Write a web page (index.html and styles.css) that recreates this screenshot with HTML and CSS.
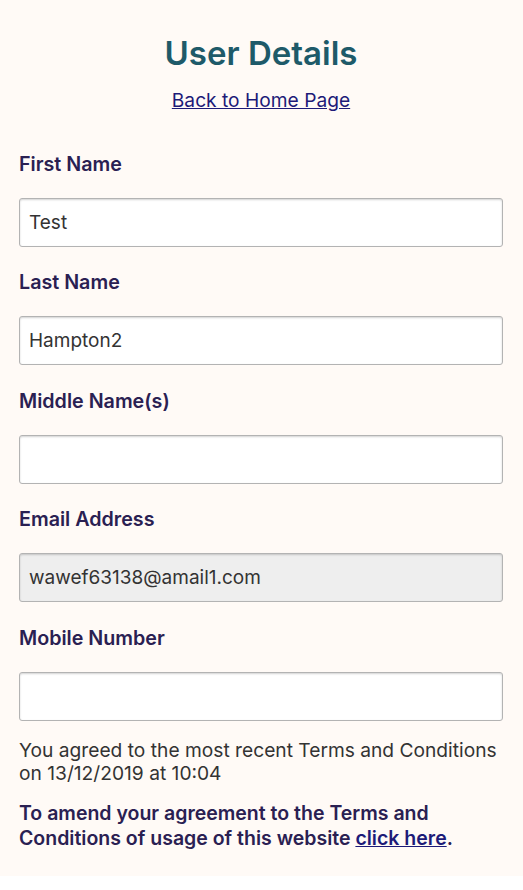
FILE: index.html
```html
<!DOCTYPE html>
<html lang="en">
<head>
<meta charset="utf-8">
<title>User Details</title>
<link rel="stylesheet" href="styles.css">
</head>
<body>
<main class="page">
  <h1 class="title">User Details</h1>
  <p class="back"><a href="#">Back to Home Page</a></p>
  <form class="form">
    <div class="field">
      <label class="label" for="first">First Name</label>
      <input class="input" id="first" type="text" value="Test">
    </div>
    <div class="field">
      <label class="label" for="last">Last Name</label>
      <input class="input" id="last" type="text" value="Hampton2">
    </div>
    <div class="field">
      <label class="label" for="middle">Middle Name(s)</label>
      <input class="input" id="middle" type="text" value="">
    </div>
    <div class="field">
      <label class="label" for="email">Email Address</label>
      <input class="input input-disabled" id="email" type="text" value="wawef63138@amail1.com" readonly>
    </div>
    <div class="field">
      <label class="label" for="mobile">Mobile Number</label>
      <input class="input" id="mobile" type="text" value="">
    </div>
  </form>
  <p class="agreed">You agreed to the most recent Terms and Conditions on 13/12/2019 at 10:04</p>
  <p class="amend">To amend your agreement to the Terms and Conditions of usage of this website <a href="#">click here</a>.</p>
</main>
</body>
</html>
```
FILE: styles.css
```css
html, body {
  margin: 0;
  padding: 0;
  background: #ffffff;
}
body {
  font-family: Inter, "Noto Sans", "Liberation Sans", sans-serif;
}
.page {
  background: #fffaf6;
  padding: 33px 20px 25px 19px;
}
.title {
  margin: 0;
  text-align: center;
  font-size: 33px;
  line-height: 40px;
  font-weight: 600;
  color: #1e5a69;
}
.back {
  margin: 15px 0 0;
  text-align: center;
  font-size: 19.2px;
  line-height: 24px;
}
.back a {
  color: #1d1a78;
  text-decoration: underline;
}
.form {
  display: flex;
  flex-direction: column;
  gap: 23.4px;
  margin-top: 40px;
}
.field {
  display: flex;
  flex-direction: column;
  gap: 22px;
}
.label {
  font-size: 19.7px;
  line-height: 24px;
  font-weight: 600;
  color: #2a2052;
}
.input {
  box-sizing: border-box;
  width: 100%;
  height: 49px;
  margin: 0;
  padding: 0 9px;
  border: 1px solid #b3b3b3;
  border-radius: 3px;
  background: #ffffff;
  box-shadow: inset 0 1px 2px rgba(0, 0, 0, 0.18);
  font-family: inherit;
  font-size: 19px;
  color: #333333;
  outline: none;
}
.input-disabled {
  background: #eeeeee;
}
.agreed {
  margin: 18px 0 0;
  font-size: 19.2px;
  line-height: 23px;
  color: #333333;
}
.amend {
  margin: 16px 0 0;
  font-size: 19.5px;
  line-height: 25px;
  font-weight: 600;
  color: #2a2052;
}
.amend a {
  color: #1d1a78;
  text-decoration: underline;
}
```
